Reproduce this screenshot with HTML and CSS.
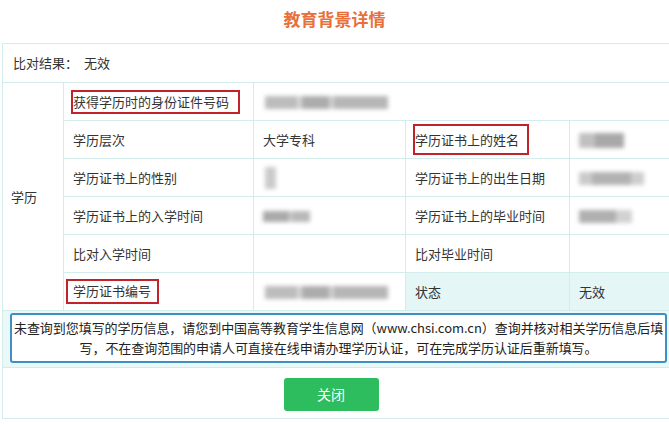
FILE: index.html
```html
<!DOCTYPE html>
<html lang="zh-CN">
<head>
  <meta charset="UTF-8" />
  <meta name="viewport" content="width=device-width, initial-scale=1.0"/>
  <title>教育背景详情</title>
  <link rel="stylesheet" href="styles.css">
</head>
<body>
  <h1 class="title">教育背景详情</h1>

  <table class="detail">
    <colgroup>
      <col class="c1"><col class="c2"><col class="c3"><col class="c4"><col class="c5">
    </colgroup>
    <tr class="result-row">
      <td colspan="5">比对结果：<span class="result-value">无效</span></td>
    </tr>
    <tr>
      <td rowspan="6" class="group">学历</td>
      <td><span class="mark mark-id">获得学历时的身份证件号码</span></td>
      <td colspan="3"><span class="blur blur-id"></span></td>
    </tr>
    <tr>
      <td>学历层次</td>
      <td>大学专科</td>
      <td><span class="mark mark-name">学历证书上的姓名</span></td>
      <td><span class="blur blur-name"></span></td>
    </tr>
    <tr>
      <td>学历证书上的性别</td>
      <td><span class="blur blur-sex"></span></td>
      <td>学历证书上的出生日期</td>
      <td><span class="blur blur-date"></span></td>
    </tr>
    <tr>
      <td>学历证书上的入学时间</td>
      <td><span class="blur blur-in"></span></td>
      <td>学历证书上的毕业时间</td>
      <td><span class="blur blur-out"></span></td>
    </tr>
    <tr>
      <td>比对入学时间</td>
      <td></td>
      <td>比对毕业时间</td>
      <td></td>
    </tr>
    <tr>
      <td><span class="mark mark-no">学历证书编号</span></td>
      <td><span class="blur blur-id"></span></td>
      <td class="tint">状态</td>
      <td class="tint">无效</td>
    </tr>
    <tr>
      <td colspan="5" class="notice-cell">
        <div class="notice">未查询到您填写的学历信息，请您到中国高等教育学生信息网（www.chsi.com.cn）查询并核对相关学历信息后填写，不在查询范围的申请人可直接在线申请办理学历认证，可在完成学历认证后重新填写。</div>
      </td>
    </tr>
    <tr>
      <td colspan="5" class="action-cell">
        <button class="btn">关闭</button>
      </td>
    </tr>
  </table>
</body>
</html>
```

FILE: styles.css
```css
* {
  box-sizing: border-box;
}

body {
  margin: 0;
  background: #fff;
  color: #333;
  font-family: "Noto Sans CJK SC", "Noto Sans", sans-serif;
  font-size: 13px;
  overflow: hidden;
}

.title {
  margin: 0 0 14px;
  padding-top: 9px;
  font-size: 17px;
  line-height: 20px;
  font-weight: bold;
  color: #e8703a;
  text-align: center;
}

.detail {
  margin-left: 2px;
  width: 668px;
  border-collapse: collapse;
  table-layout: fixed;
}

.c1 { width: 61px; }
.c2 { width: 190px; }
.c3 { width: 152px; }
.c4 { width: 164px; }
.c5 { width: 101px; }

.detail td {
  border: 1px solid #d3ecec;
  height: 38px;
  padding: 0 0 0 9px;
  vertical-align: middle;
  line-height: 16px;
  white-space: nowrap;
}

.result-row td {
  height: 39px;
  padding-left: 10px;
}

.result-value {
  margin-left: 6px;
}

.detail td.group {
  padding-left: 8px;
}

.detail td.tint {
  background: #e5f6f6;
}

.mark {
  display: inline-block;
  border: 2px solid #c1232b;
  line-height: 16px;
}

.mark-id {
  margin-left: -2px;
  padding: 2px 9px 2px 0;
}

.mark-name {
  margin-left: -2px;
  padding: 6px 8px 5px 0;
}

.mark-no {
  margin-left: -7px;
  padding: 2px 6px 3px 5px;
}

.blur {
  display: inline-block;
  vertical-align: middle;
  height: 13px;
  background: #b4b4b4;
  filter: blur(2px);
}

.blur-id {
  width: 123px;
  margin-left: 2px;
  background: linear-gradient(90deg, #bcbcbc 0 26%, #d6d6d6 26% 30%, #acacac 30% 52%, #d0d0d0 52% 56%, #b6b6b6 56% 100%);
}

.blur-name {
  width: 45px;
  height: 15px;
  background: linear-gradient(90deg, #c0c0c0 0 35%, #a8a8a8 35% 100%);
}

.blur-sex {
  width: 11px;
  height: 22px;
  margin-left: 2px;
  background: #cbcbcb;
}

.blur-date {
  width: 65px;
  background: linear-gradient(90deg, #cacaca 0 20%, #b2b2b2 20% 80%, #cecece 80% 100%);
}

.blur-in {
  width: 47px;
  height: 11px;
  background: linear-gradient(90deg, #aaaaaa 0 55%, #d0d0d0 55% 62%, #b8b8b8 62% 100%);
}

.blur-out {
  width: 53px;
  background: linear-gradient(90deg, #b0b0b0 0 70%, #d2d2d2 70% 100%);
}

.detail td.notice-cell {
  height: 56px;
  padding: 2px 3px 4px 7px;
  background: #eaf8f8;
  white-space: normal;
}

.notice {
  background: #fff;
  border: 2px solid #3d8fc6;
  border-radius: 3px;
  padding: 3px 0;
  line-height: 20px;
  text-align: center;
  color: #222;
  letter-spacing: -0.05px;
}

.detail td.action-cell {
  height: 51px;
  padding: 2px 11px 0 0;
  text-align: center;
}

.btn {
  width: 95px;
  height: 33px;
  border: none;
  border-radius: 3px;
  background: #2dbc5e;
  color: #fff;
  font-family: inherit;
  font-size: 14px;
  cursor: pointer;
}
```
